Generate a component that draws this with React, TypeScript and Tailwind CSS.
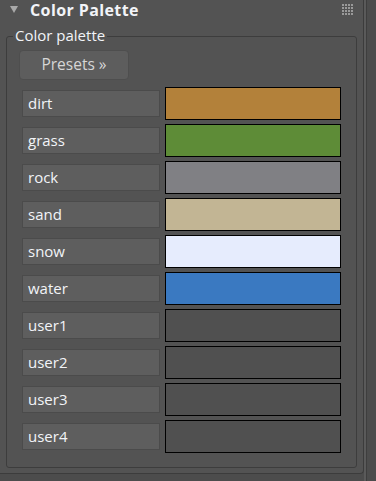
const rows: { name: string; color: string | null }[] = [
  { name: 'dirt', color: '#b3813a' },
  { name: 'grass', color: '#5e8c37' },
  { name: 'rock', color: '#808084' },
  { name: 'sand', color: '#c2b594' },
  { name: 'snow', color: '#e6ecfd' },
  { name: 'water', color: '#3a79c1' },
  { name: 'user1', color: null },
  { name: 'user2', color: null },
  { name: 'user3', color: null },
  { name: 'user4', color: null },
];

function Grip() {
  return (
    <div className="grid grid-cols-4 gap-[1px]">
      {Array.from({ length: 16 }).map((_, i) => (
        <div key={i} className="w-[2px] h-[2px] bg-[#9a9a9a]" />
      ))}
    </div>
  );
}

export default function App() {
  return (
    <div
      className="w-[376px] h-[481px] bg-[#4c4c4c] flex overflow-hidden text-[#f2f4f8]"
      style={{ fontFamily: '"Open Sans", "Noto Sans", sans-serif' }}
    >
      <div className="w-[364px] h-[474px] bg-[#535353] border-r border-b border-[#3c3c3c] rounded-br-[4px] flex flex-col">
        <div className="h-[19px] flex items-center pl-[10px] pr-[10px]">
          <svg width="8" height="7" viewBox="0 0 8 7" className="mr-[12px]">
            <path d="M0 0 H8 L4 7 Z" fill="#a9a9a9" />
          </svg>
          <span className="font-bold text-[16px] leading-none flex-1 tracking-[0.4px]">Color Palette</span>
          <Grip />
        </div>
        <fieldset className="ml-[6px] mt-[9px] w-[351px] h-[440px] border border-[#3d3d3d] rounded-[3px] px-[12px] pt-[3px]">
          <legend className="-ml-[6px] px-[2px] text-[15px] leading-none pb-[1px]">Color palette</legend>
          <button className="mt-[3px] w-[110px] h-[30px] rounded-[4px] bg-[#5d5d5d] border border-[#4e4e4e] text-[15.5px] text-[#d6d6d6]">
            Presets »
          </button>
          <div className="mt-[7px] flex flex-col gap-[4px]">
            {rows.map((r) => (
              <div key={r.name} className="flex items-center h-[33px]">
                <div className="ml-[3px] w-[138px] h-[27px] bg-[#5e5e5e] border border-[#4b4b4b] flex items-center pl-[5px] text-[15px]">
                  {r.name}
                </div>
                <div
                  className="ml-[5px] w-[176px] h-[33px] border border-black"
                  style={{ backgroundColor: r.color ?? '#505050' }}
                />
              </div>
            ))}
          </div>
        </fieldset>
      </div>
      <div className="flex-1 flex">
        <div className="w-[2px] bg-[#5a5a5a]" />
        <div className="w-[1px] bg-[#3e3e3e]" />
      </div>
    </div>
  );
}
